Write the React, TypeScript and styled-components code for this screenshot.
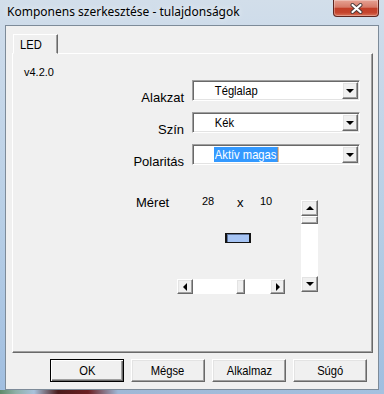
import styled, { createGlobalStyle, css } from "styled-components";

const GlobalStyle = createGlobalStyle`
  html, body {
    margin: 0;
    padding: 0;
  }
  body {
    width: 384px;
    height: 394px;
    overflow: hidden;
    font-family: "Liberation Sans", Arial, sans-serif;
    color: #000;
  }
`;

const raised = css`
  box-sizing: border-box;
  border: 1px solid;
  border-color: #ffffff #696969 #696969 #ffffff;
  box-shadow: inset -1px -1px #a0a0a0, inset 1px 1px #e3e3e3;
  background: #f0f0f0;
`;

const sunken = css`
  box-sizing: border-box;
  border: 1px solid;
  border-color: #a0a0a0 #ffffff #ffffff #a0a0a0;
  box-shadow: inset 1px 1px #696969, inset -1px -1px #e3e3e3;
  background: #ffffff;
`;

// the dialog font of the original is narrower than Arial
const Narrow = styled.span<{ $origin?: string; $selected?: boolean }>`
  display: inline-block;
  font-size: 13px;
  transform: scaleX(0.86);
  transform-origin: ${(p) => p.$origin ?? "left"} center;
  white-space: nowrap;
  ${(p) =>
    p.$selected &&
    css`
      background: #3399ff;
      color: #ffffff;
      box-shadow: 1px 0 #d9822b;
    `}
`;

const Window = styled.div`
  width: 384px;
  height: 394px;
  box-sizing: border-box;
  display: flex;
  flex-direction: column;
  background:
    linear-gradient(90deg, #5f8a6a 0px, #8fb0a8 16px, #a9c2dc 34px, #4a1c1c 58px, #6b1f22 88px, #9fb8d6 118px, #a4c1e0 100%) bottom / 100% 4px no-repeat,
    linear-gradient(180deg, #d2deea 0%, #cbdaea 12%, #b8cfe6 55%, #a0bee0 100%);
`;

const TitleBar = styled.div`
  height: 25px;
  flex: none;
  display: flex;
  align-items: flex-start;
  justify-content: space-between;
  padding: 0 5px 0 7px;
`;

const Title = styled.span`
  font-family: "Noto Sans", "Open Sans", sans-serif;
  font-size: 12px;
  line-height: 16px;
  margin-top: 4px;
  text-shadow: 0 0 6px rgba(255, 255, 255, 0.9);
`;

const CloseButton = styled.div`
  width: 46px;
  height: 17px;
  box-sizing: border-box;
  border: 1px solid #5e2620;
  border-top: none;
  border-radius: 0 0 4px 4px;
  background: linear-gradient(180deg, #e6a294 0%, #d67a68 45%, #c23e28 52%, #c5442d 78%, #d9735a 100%);
  box-shadow: inset 0 0 0 1px rgba(255, 255, 255, 0.3);
  display: flex;
  align-items: center;
  justify-content: center;
`;

const Client = styled.div`
  flex: 1;
  margin: 0 5px 4px 5px;
  border: 1px solid #7d8b99;
  background: #f0f0f0;
  display: flex;
  flex-direction: column;
  padding: 8px 5px 0 6px;
`;

const TabStrip = styled.div`
  display: flex;
  padding-left: 1px;
`;

const Tab = styled.div`
  position: relative;
  z-index: 1;
  width: 45px;
  height: 20px;
  margin-bottom: -1px;
  box-sizing: border-box;
  border: 1px solid;
  border-color: #ffffff #696969 transparent #ffffff;
  box-shadow: inset -1px 0 #a0a0a0;
  background: #f0f0f0;
  padding-left: 6px;
  line-height: 17px;
`;

const Panel = styled.div`
  width: 361px;
  height: 300px;
  box-sizing: border-box;
  border: 1px solid;
  border-color: #ffffff #696969 #696969 #ffffff;
  box-shadow: inset -1px -1px #a0a0a0;
  display: flex;
  flex-direction: column;
`;

const Version = styled.div`
  margin: 12px 0 0 11px;
  font-size: 11px;
  line-height: 13px;
`;

const Form = styled.div`
  margin-top: 1px;
  display: grid;
  grid-template-columns: 171px 168px;
  grid-auto-rows: 21px;
  column-gap: 8px;
  row-gap: 11px;
`;

const Label = styled.div`
  text-align: right;
  font-size: 13px;
  line-height: 21px;
  padding-top: 7px;
  white-space: nowrap;
`;

const Combo = styled.div`
  ${sunken};
  height: 21px;
  padding: 1px;
  display: flex;
`;

const ComboField = styled.div`
  flex: 1;
  display: flex;
  align-items: center;
  padding-left: 20px;
`;

const ComboText = styled(Narrow)`
  height: 15px;
  box-sizing: border-box;
  padding: 1px 1px 0 1px;
  line-height: 14px;
`;

const ArrowButton = styled.div<{ $w: number; $h: number }>`
  ${raised};
  width: ${(p) => p.$w}px;
  height: ${(p) => p.$h}px;
  flex: none;
  display: flex;
  align-items: center;
  justify-content: center;
`;

const Arrow = styled.span<{ $dir: "up" | "down" | "left" | "right" }>`
  width: 0;
  height: 0;
  border-style: solid;
  ${(p) =>
    p.$dir === "down"
      ? "border-width: 4px 4px 0 4px; border-color: #000 transparent transparent transparent;"
      : p.$dir === "up"
      ? "border-width: 0 4px 4px 4px; border-color: transparent transparent #000 transparent;"
      : p.$dir === "left"
      ? "border-width: 4px 4px 4px 0; border-color: transparent #000 transparent transparent;"
      : "border-width: 4px 0 4px 4px; border-color: transparent transparent transparent #000;"}
`;

const SizeSection = styled.div`
  margin: 30px 0 0 123px;
  display: flex;
  align-items: flex-start;
`;

const SizeLabel = styled.div`
  width: 41px;
  font-size: 13px;
  line-height: 15px;
`;

const SizeColumn = styled.div`
  width: 108px;
  height: 99px;
  display: flex;
  flex-direction: column;
`;

const Values = styled.div`
  display: grid;
  grid-template-columns: 35px 23px auto;
  padding-left: 25px;
  font-size: 11px;
  line-height: 13px;
`;

const Times = styled.span`
  font-size: 13px;
  padding-top: 1px;
`;

const Preview = styled.div`
  flex: 1;
  padding: 24px 0 0 48px;
`;

const LedShape = styled.div`
  width: 26px;
  height: 10px;
  box-sizing: border-box;
  border: 1px solid #141414;
  border-left-width: 2px;
  border-right-width: 2px;
  box-shadow: inset 1px 1px #5c739c;
  background: #a6c4f4;
`;

const HScroll = styled.div`
  height: 15px;
  display: flex;
  background: #ffffff;
`;

const VScroll = styled.div`
  width: 17px;
  height: 92px;
  margin: 5px 0 0 16px;
  display: flex;
  flex-direction: column;
  background: #ffffff;
`;

const Track = styled.div<{ $size?: number }>`
  ${(p) => (p.$size ? `flex: none; flex-basis: ${p.$size}px;` : "flex: 1;")}
  background: #ffffff;
`;

const Thumb = styled.div<{ $w: number; $h: number }>`
  ${raised};
  flex: none;
  width: ${(p) => p.$w}px;
  height: ${(p) => p.$h}px;
`;

const ButtonRow = styled.div`
  margin-top: 6px;
  padding-right: 6px;
  display: flex;
  justify-content: flex-end;
  gap: 7px;
`;

const Button = styled.button<{ $default?: boolean }>`
  ${raised};
  width: 74px;
  height: 23px;
  padding: 0;
  font-family: "Liberation Sans", Arial, sans-serif;
  color: #000;
  ${(p) =>
    p.$default &&
    css`
      border-color: #000;
      box-shadow: inset 1px 1px #ffffff, inset -1px -1px #696969, inset -2px -2px #a0a0a0;
    `}
`;

function CloseGlyph() {
  return (
    <svg width="13" height="11" viewBox="0 0 13 11">
      <path d="M2.5 2 L10.5 9 M10.5 2 L2.5 9" stroke="#4a3a3a" strokeWidth="4" strokeLinecap="round" />
      <path d="M2.5 2 L10.5 9 M10.5 2 L2.5 9" stroke="#ffffff" strokeWidth="2.2" strokeLinecap="round" />
    </svg>
  );
}

const rows = [
  { label: "Alakzat", value: "Téglalap" },
  { label: "Szín", value: "Kék" },
  { label: "Polaritás", value: "Aktív magas", selected: true },
];

const buttons = ["OK", "Mégse", "Alkalmaz", "Súgó"];

export default function App() {
  return (
    <>
      <GlobalStyle />
      <Window>
        <TitleBar>
          <Title>Komponens szerkesztése - tulajdonságok</Title>
          <CloseButton>
            <CloseGlyph />
          </CloseButton>
        </TitleBar>
        <Client>
          <TabStrip>
            <Tab>
              <Narrow>LED</Narrow>
            </Tab>
          </TabStrip>
          <Panel>
            <Version>v4.2.0</Version>
            <Form>
              {rows.map((r) => [
                <Label key={r.label + "-l"}>{r.label}</Label>,
                <Combo key={r.label + "-c"}>
                  <ComboField>
                    <ComboText $selected={r.selected}>{r.value}</ComboText>
                  </ComboField>
                  <ArrowButton $w={16} $h={17}>
                    <Arrow $dir="down" />
                  </ArrowButton>
                </Combo>,
              ])}
            </Form>
            <SizeSection>
              <SizeLabel>Méret</SizeLabel>
              <SizeColumn>
                <Values>
                  <span>28</span>
                  <Times>x</Times>
                  <span>10</span>
                </Values>
                <Preview>
                  <LedShape />
                </Preview>
                <HScroll>
                  <ArrowButton $w={16} $h={15}>
                    <Arrow $dir="left" />
                  </ArrowButton>
                  <Track $size={43} />
                  <Thumb $w={9} $h={15} />
                  <Track />
                  <ArrowButton $w={15} $h={15}>
                    <Arrow $dir="right" />
                  </ArrowButton>
                </HScroll>
              </SizeColumn>
              <VScroll>
                <ArrowButton $w={17} $h={16}>
                  <Arrow $dir="up" />
                </ArrowButton>
                <Thumb $w={17} $h={8} />
                <Track />
                <ArrowButton $w={17} $h={16}>
                  <Arrow $dir="down" />
                </ArrowButton>
              </VScroll>
            </SizeSection>
          </Panel>
          <ButtonRow>
            {buttons.map((b, i) => (
              <Button key={b} $default={i === 0}>
                <Narrow $origin="center">{b}</Narrow>
              </Button>
            ))}
          </ButtonRow>
        </Client>
      </Window>
    </>
  );
}
